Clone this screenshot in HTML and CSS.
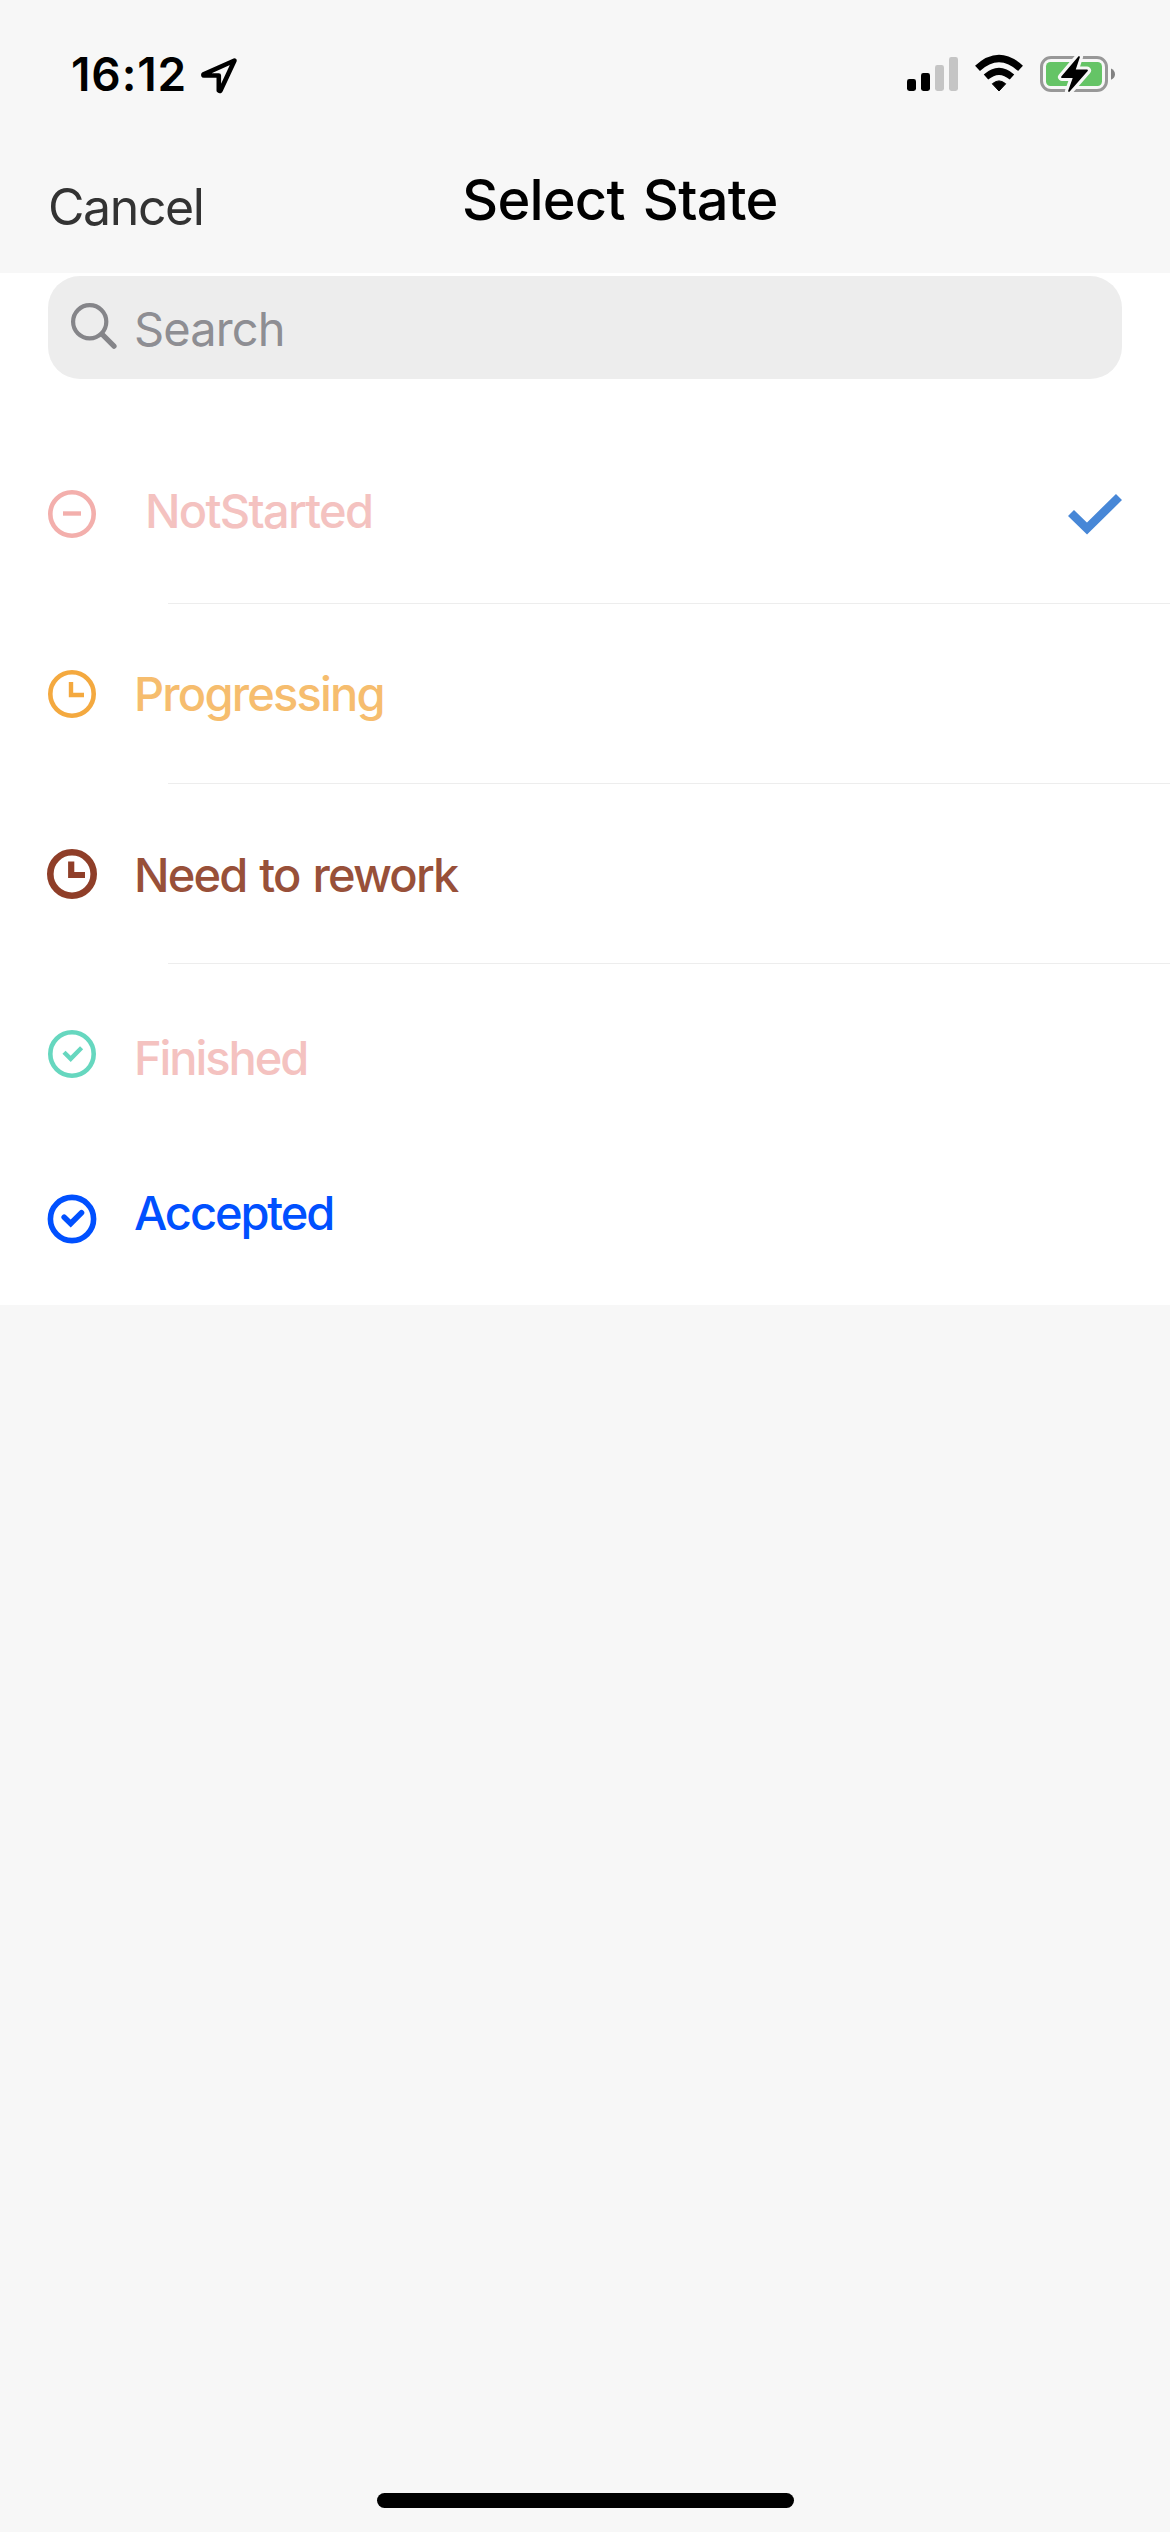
FILE: index.html
```html
<!DOCTYPE html>
<html lang="en">
<head>
<meta charset="utf-8">
<title>Select State</title>
<link rel="stylesheet" href="styles.css">
</head>
<body>
<div class="screen">
  <header class="top">
    <div class="status">
      <span class="time">16:12</span>
      <svg class="location" viewBox="0 0 38 38" width="38" height="38"><path d="M34.5 4.5 3.5 18.4Q3 19.4 4 19.5H18.8V34.5Q19.5 35.5 20.5 34.5Z" fill="none" stroke="#000" stroke-width="4.6" stroke-linejoin="round"/></svg>
      <svg class="signals" viewBox="0 0 212 40" width="212" height="40">
        <g>
          <rect x="2" y="25" width="9" height="12" rx="2.4"/>
          <rect x="16" y="19" width="9" height="18" rx="2.4"/>
          <rect x="30" y="11" width="9" height="26" rx="2.4" fill="#c5c5c5"/>
          <rect x="44" y="3" width="9" height="34" rx="2.4" fill="#c5c5c5"/>
        </g>
        <path d="M72.5 14.3Q94 -5.5 115.5 14.3" fill="none" stroke="#000" stroke-width="7.2"/>
        <path d="M81 23Q94 11.7 107 23" fill="none" stroke="#000" stroke-width="6.8"/>
        <path d="M87.3 29.8Q94 24 100.7 29.8L94 37Z" stroke="#000" stroke-width="1" stroke-linejoin="round"/>
        <rect x="136.5" y="3.5" width="65" height="33" rx="9.5" fill="none" stroke="#989898" stroke-width="3"/>
        <path d="M206 14.5Q210 16.5 210 20.2T206 25.7Z" fill="#828282"/>
        <rect x="141" y="8" width="56" height="24" rx="4.5" fill="#65c466"/>
        <path class="halo" d="M174 3 157 23h12L164 37 182 16.5h-12.5Z"/>
        <path d="M174 3 157 23h12L164 37 182 16.5h-12.5Z" stroke="#000" stroke-width="1.8" stroke-linejoin="round"/>
      </svg>
    </div>
    <nav class="nav">
      <span class="cancel">Cancel</span>
      <h1 class="title">Select State</h1>
    </nav>
  </header>

  <main class="panel">
    <div class="search">
      <svg viewBox="0 0 48 48" width="48" height="48" fill="none" stroke="#858589"><circle cx="20.7" cy="20.7" r="16.6" stroke-width="4.2"/><path d="M33 33.2 45 45.2" stroke-width="5.2" stroke-linecap="round"/></svg>
      <span>Search</span>
    </div>
    <ul class="states">
      <li class="row not-started">
        <svg class="icon" viewBox="0 0 50 50"><circle cx="25" cy="25" r="21.7" stroke-width="4.6"/><path d="M16 24.5H34" stroke-width="4.4"/></svg>
        <span class="label">NotStarted</span>
        <svg class="check" viewBox="0 0 54 42" width="54" height="42"><path d="M3 20 19 35.5 51 4" fill="none" stroke="#4787d7" stroke-width="8.6"/></svg>
      </li>
      <li class="row progressing">
        <svg class="icon" viewBox="0 0 50 50"><circle cx="25" cy="25" r="21.7" stroke-width="4.6"/><path d="M24 13V26H37" stroke-width="4.4"/></svg>
        <span class="label">Progressing</span>
      </li>
      <li class="row rework">
        <svg class="icon" viewBox="0 0 50 50"><circle cx="25" cy="25" r="21.7" stroke-width="6.6"/><path d="M24.2 12.5V26H38" stroke-width="6.2"/></svg>
        <span class="label">Need to rework</span>
      </li>
      <li class="row finished">
        <svg class="icon" viewBox="0 0 50 50"><circle cx="25" cy="25" r="21.7" stroke-width="4.6"/><path d="M17 23.2 23.7 29.8 34.6 18.8" stroke-width="4.4"/></svg>
        <span class="label">Finished</span>
      </li>
      <li class="row accepted">
        <svg class="icon" viewBox="0 0 50 50"><circle cx="25" cy="25" r="21.6" stroke-width="5.6"/><path d="M17.2 23.2 23.7 29.5 34.5 18.8" stroke-width="5.6" stroke-linecap="round"/></svg>
        <span class="label">Accepted</span>
      </li>
    </ul>
  </main>

  <footer class="home"><div class="indicator"></div></footer>
</div>
</body>
</html>
```
FILE: styles.css
```css
* { box-sizing: border-box; }

body {
  margin: 0;
  background: #f7f7f7;
  font-family: Inter, "Liberation Sans", sans-serif;
}

.screen {
  display: flex;
  flex-direction: column;
  width: 1170px;
  height: 2532px;
  overflow: hidden;
}

.top { height: 273px; }

.status {
  display: flex;
  align-items: flex-start;
  height: 132px;
  padding: 54px 53px 0 71px;
}

.time {
  width: 129px;
  font-size: 46px;
  font-weight: 600;
  line-height: 40px;
  letter-spacing: 0.9px;
  white-space: nowrap;
}

.location { margin-top: 2px; }

.signals { margin-left: auto; }

.halo {
  fill: #f7f7f7;
  stroke: #f7f7f7;
  stroke-width: 8px;
  stroke-linejoin: round;
}

.nav {
  display: flex;
  height: 141px;
  padding-left: 48px;
  white-space: nowrap;
}

.cancel {
  width: 414px;
  margin-top: 45px;
  color: #333;
  font-size: 50px;
  line-height: 60px;
  letter-spacing: -1.4px;
}

.title {
  margin: 38px 0 0;
  font-size: 56px;
  font-weight: 500;
  line-height: 60px;
  letter-spacing: -0.8px;
  word-spacing: 4px;
}

.panel {
  height: 1032px;
  padding-top: 3px;
  background: #fff;
}

.search {
  display: flex;
  align-items: flex-start;
  height: 103px;
  margin: 0 48px;
  padding: 25px 21px;
  border-radius: 32px;
  background: #ededed;
  color: #8e8e93;
}

.search span {
  margin: -2px 0 0 17px;
  font-size: 47px;
  line-height: 60px;
  letter-spacing: -0.9px;
}

.states {
  margin: 45px 0 0;
  padding: 0;
  list-style: none;
}

.row {
  display: flex;
  align-items: center;
  height: 180px;
  padding: 0 48px 0 47px;
  background: linear-gradient(#ededed, #ededed) 168px 100% / 1002px 1px no-repeat;
}

.finished, .accepted { background: none; }

.icon {
  flex: none;
  width: 50px;
  height: 50px;
  margin-right: 37px;
  overflow: visible;
  fill: none;
  stroke: currentColor;
}

.label {
  font-size: 47px;
  font-weight: 500;
  line-height: 60px;
  letter-spacing: -1.8px;
  white-space: nowrap;
}

.check { margin-left: auto; }

.not-started { color: #f3afac; }
.not-started .label { margin: -6px 0 0 11px; color: #f4c2c0; letter-spacing: -1.7px; }
.progressing { color: #f4a93f; }
.progressing .label { color: #f6bd6e; }
.rework { color: #8f3e28; }
.rework .label { margin-top: 2px; color: #985039; word-spacing: 2px; }
.finished { color: #66d7bf; }
.finished .label { margin-top: 8px; color: #f4c2c0; letter-spacing: -2.1px; }
.accepted { height: 150px; color: #0050ff; }
.accepted .label { margin-top: -12px; letter-spacing: -2.1px; }

.home {
  display: flex;
  justify-content: center;
  margin-top: auto;
  padding-bottom: 24px;
}

.indicator {
  width: 417px;
  height: 15px;
  border-radius: 8px;
  background: #000;
}
```
